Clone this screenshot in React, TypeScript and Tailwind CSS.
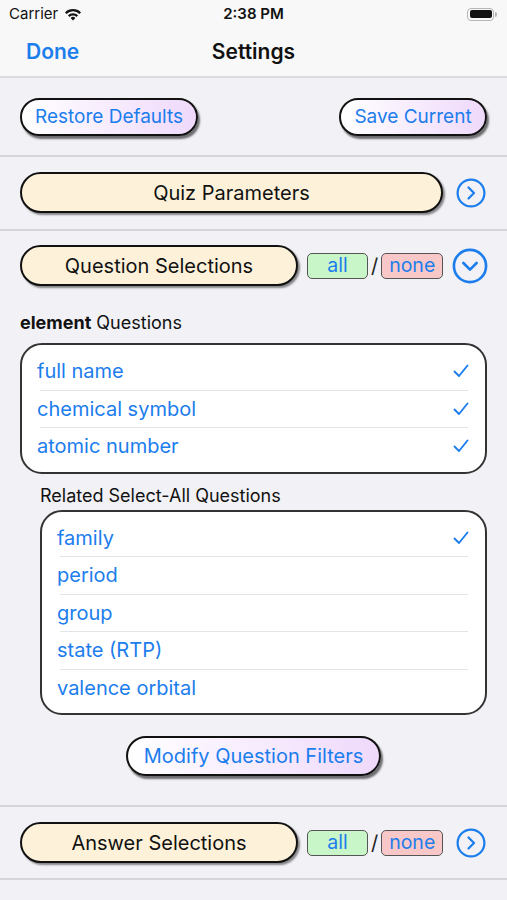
import React from "react";

const BLUE = "text-[#1c7ded]";

function CircleChevron({ dir, size }: { dir: "right" | "down"; size: number }) {
  return (
    <svg width={size} height={size} viewBox="0 0 30 30" fill="none" stroke="#1c7ded" strokeWidth="2.2" strokeLinecap="round" strokeLinejoin="round">
      <circle cx="15" cy="15" r="13.4" />
      {dir === "right" ? <path d="M12.5 9.5 L18 15 L12.5 20.5" /> : <path d="M9.5 12.5 L15 18 L20.5 12.5" />}
    </svg>
  );
}

function Check() {
  return (
    <svg width="16" height="14" viewBox="0 0 16 14" fill="none" stroke="#1c7ded" strokeWidth="1.9" strokeLinecap="round" strokeLinejoin="round">
      <path d="M1.5 7.5 L6 12 L14.5 1.5" />
    </svg>
  );
}

function GradientButton({ label, className = "" }: { label: string; className?: string }) {
  return (
    <button className={`h-[38px] rounded-full border-2 border-[#111] bg-gradient-to-r from-white to-[#efd9fb] shadow-[2px_3px_2px_rgba(0,0,0,0.55)] text-[19px] ${BLUE} ${className}`}>
      {label}
    </button>
  );
}

function SectionPill({ label, className = "" }: { label: string; className?: string }) {
  return (
    <div className={`h-[41px] rounded-full border-2 border-[#111] bg-[#fdf2d9] shadow-[2px_2px_2px_rgba(0,0,0,0.45)] flex items-center justify-center text-[20px] text-[#111] ${className}`}>
      {label}
    </div>
  );
}

function AllNone() {
  return (
    <div className="flex items-center ml-[9px]">
      <div className={`w-[61px] h-[26px] rounded-[5px] border-[1.5px] border-[#555] bg-[#c9f6c9] flex items-center justify-center text-[19.5px] ${BLUE}`}>all</div>
      <span className="mx-[3px] text-[20px] text-[#222]">/</span>
      <div className={`w-[62px] h-[26px] rounded-[5px] border-[1.5px] border-[#555] bg-[#f8c8c8] flex items-center justify-center text-[19.5px] ${BLUE}`}>none</div>
    </div>
  );
}

function ListBox({ items, checked, className = "" }: { items: string[]; checked: boolean[]; className?: string }) {
  return (
    <div className={`bg-white border-2 border-[#333] rounded-[22px] pt-[8px] pb-[7px] ${className}`}>
      {items.map((item, i) => (
        <div key={item} className="pl-[15px] pr-[16px]">
          <div className={`h-[36.5px] flex items-center justify-between text-[20px] ${BLUE}`}>
            <span>{item}</span>
            {checked[i] && <Check />}
          </div>
          {i < items.length - 1 && <div className="h-px bg-[#e4e4e8] ml-[3px] mr-[1px]" />}
        </div>
      ))}
    </div>
  );
}

function Divider() {
  return <div className="h-[2px] bg-[#d5d5da]" />;
}

export default function App() {
  return (
    <div className="w-[507px] h-[900px] overflow-hidden bg-[#f1f1f6] font-['Inter','Liberation_Sans',sans-serif] antialiased">
      {/* status bar + nav */}
      <div className="bg-[#f8f8f8] border-b-2 border-[#dcdcdf]">
        <div className="h-[28px] relative flex items-center px-[9px] text-[15px] text-[#111]">
          <span>Carrier</span>
          <svg className="ml-[6px]" width="18" height="13" viewBox="0 0 18 13" fill="#111">
            <path d="M9 12.5 L6.6 9.9 A3.4 3.4 0 0 1 11.4 9.9 Z" />
            <path d="M3.9 7.3 A7.3 7.3 0 0 1 14.1 7.3 L12.5 8.9 A5 5 0 0 0 5.5 8.9 Z" />
            <path d="M1 4.4 A11.4 11.4 0 0 1 17 4.4 L15.4 6 A9.1 9.1 0 0 0 2.6 6 Z" />
          </svg>
          <span className="absolute left-1/2 -translate-x-1/2 font-semibold">2:38 PM</span>
          <div className="ml-auto mr-[1px] flex items-center">
            <div className="w-[27px] h-[13px] rounded-[4px] border border-[#b5b5b5] p-[1.5px]">
              <div className="w-full h-full rounded-[2px] bg-[#111]" />
            </div>
            <div className="w-[2px] h-[5px] rounded-r bg-[#b5b5b5] ml-[1px]" />
          </div>
        </div>
        <div className="h-[48px] relative flex items-center px-[26px]">
          <span className={`text-[21px] font-semibold ${BLUE}`}>Done</span>
          <span className="absolute left-1/2 -translate-x-1/2 text-[21px] font-semibold text-[#111]">Settings</span>
        </div>
      </div>

      {/* defaults */}
      <div className="flex justify-between px-[20px] pt-[20px] pb-[19px]">
        <GradientButton label="Restore Defaults" className="w-[178px]" />
        <GradientButton label="Save Current" className="w-[148px]" />
      </div>
      <Divider />

      {/* quiz parameters */}
      <div className="flex items-center pl-[20px] pr-[21px] pt-[15px] pb-[16px]">
        <SectionPill label="Quiz Parameters" className="flex-1 h-[40px]" />
        <div className="ml-[13px] flex">
          <CircleChevron dir="right" size={30} />
        </div>
      </div>
      <Divider />

      {/* question selections */}
      <div className="pt-[14px] pb-[29px]">
        <div className="flex items-center pl-[20px] pr-[19px]">
          <SectionPill label="Question Selections" className="w-[278px]" />
          <AllNone />
          <div className="ml-auto flex">
            <CircleChevron dir="down" size={36} />
          </div>
        </div>
        <div className="px-[20px] pt-[23px] text-[18px] text-[#111]">
          <span className="font-bold">element</span> Questions
        </div>
        <div className="mx-[20px] mt-[7px]">
          <ListBox items={["full name", "chemical symbol", "atomic number"]} checked={[true, true, true]} />
        </div>
        <div className="pl-[40px] pt-[8px] text-[18px] text-[#111]">Related Select-All Questions</div>
        <div className="ml-[40px] mr-[20px] mt-[1px]">
          <ListBox
            items={["family", "period", "group", "state (RTP)", "valence orbital"]}
            checked={[true, false, false, false, false]}
          />
        </div>
        <div className="flex justify-center mt-[21px]">
          <GradientButton label="Modify Question Filters" className="w-[255px] h-[40px] text-[20px]" />
        </div>
      </div>
      <Divider />

      {/* answer selections */}
      <div className="flex items-center pl-[20px] pr-[21px] pt-[15px] pb-[15px]">
        <SectionPill label="Answer Selections" className="w-[278px] h-[40px]" />
        <AllNone />
        <div className="ml-auto flex">
          <CircleChevron dir="right" size={30} />
        </div>
      </div>
      <Divider />
    </div>
  );
}
